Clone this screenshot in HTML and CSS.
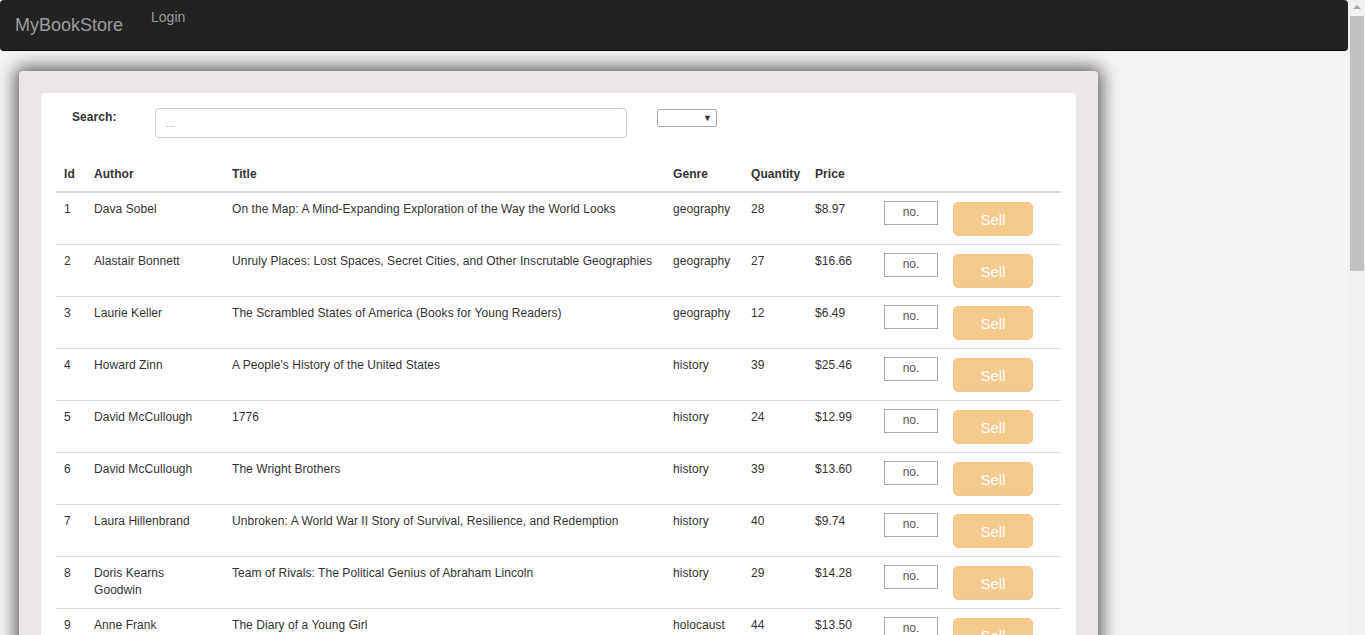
FILE: index.html
```html
<!DOCTYPE html>
<html>
<head>
<meta charset="utf-8">
<title>MyBookStore</title>
<link rel="stylesheet" href="styles.css">
</head>
<body>
<nav class="navbar">
  <a class="brand" href="#">MyBookStore</a>
  <a class="nav-link" href="#">Login</a>
</nav>
<div class="outer">
  <div class="inner">
    <div class="search-row">
      <label class="search-label">Search:</label>
      <input class="search-input" type="text" placeholder="...">
      <div class="select-box"><span class="arrow">&#9660;</span></div>
    </div>
    <table class="books">
      <colgroup>
        <col class="c-id"><col class="c-author"><col class="c-title"><col class="c-genre"><col class="c-qty"><col class="c-price"><col class="c-no"><col class="c-btn">
      </colgroup>
      <thead>
        <tr><th>Id</th><th>Author</th><th>Title</th><th>Genre</th><th>Quantity</th><th>Price</th><th></th><th></th></tr>
      </thead>
      <tbody>
        <tr><td>1</td><td>Dava Sobel</td><td>On the Map: A Mind-Expanding Exploration of the Way the World Looks</td><td>geography</td><td>28</td><td>$8.97</td><td><input class="no" type="text" placeholder="no."></td><td><button class="sell" disabled>Sell</button></td></tr>
        <tr><td>2</td><td>Alastair Bonnett</td><td>Unruly Places: Lost Spaces, Secret Cities, and Other Inscrutable Geographies</td><td>geography</td><td>27</td><td>$16.66</td><td><input class="no" type="text" placeholder="no."></td><td><button class="sell" disabled>Sell</button></td></tr>
        <tr><td>3</td><td>Laurie Keller</td><td>The Scrambled States of America (Books for Young Readers)</td><td>geography</td><td>12</td><td>$6.49</td><td><input class="no" type="text" placeholder="no."></td><td><button class="sell" disabled>Sell</button></td></tr>
        <tr><td>4</td><td>Howard Zinn</td><td>A People's History of the United States</td><td>history</td><td>39</td><td>$25.46</td><td><input class="no" type="text" placeholder="no."></td><td><button class="sell" disabled>Sell</button></td></tr>
        <tr><td>5</td><td>David McCullough</td><td>1776</td><td>history</td><td>24</td><td>$12.99</td><td><input class="no" type="text" placeholder="no."></td><td><button class="sell" disabled>Sell</button></td></tr>
        <tr><td>6</td><td>David McCullough</td><td>The Wright Brothers</td><td>history</td><td>39</td><td>$13.60</td><td><input class="no" type="text" placeholder="no."></td><td><button class="sell" disabled>Sell</button></td></tr>
        <tr><td>7</td><td>Laura Hillenbrand</td><td>Unbroken: A World War II Story of Survival, Resilience, and Redemption</td><td>history</td><td>40</td><td>$9.74</td><td><input class="no" type="text" placeholder="no."></td><td><button class="sell" disabled>Sell</button></td></tr>
        <tr><td>8</td><td>Doris Kearns Goodwin</td><td>Team of Rivals: The Political Genius of Abraham Lincoln</td><td>history</td><td>29</td><td>$14.28</td><td><input class="no" type="text" placeholder="no."></td><td><button class="sell" disabled>Sell</button></td></tr>
        <tr><td>9</td><td>Anne Frank</td><td>The Diary of a Young Girl</td><td>holocaust</td><td>44</td><td>$13.50</td><td><input class="no" type="text" placeholder="no."></td><td><button class="sell" disabled>Sell</button></td></tr>
      </tbody>
    </table>
  </div>
</div>
<div class="fake-scrollbar">
  <div class="sb-up"></div>
  <div class="sb-thumb"></div>
</div>
</body>
</html>
```
FILE: styles.css
```css
body {
  margin: 0;
  padding-right: 17px;
  background: #f4f4f4;
  font-family: "Liberation Sans", Arial, Helvetica, sans-serif;
  font-size: 12px;
  line-height: 17px;
  letter-spacing: 0.06px;
  color: #333;
}
.fake-scrollbar {
  position: fixed;
  top: 0;
  right: 0;
  width: 17px;
  height: 100%;
  background: #f1f1f1;
}
.sb-up {
  margin: 5px auto 0;
  width: 0;
  height: 0;
  border-left: 4px solid transparent;
  border-right: 4px solid transparent;
  border-bottom: 4px solid #a3a3a3;
}
.sb-thumb {
  margin: 7px 1px 0 2px;
  height: 255px;
  background: #c1c1c1;
}
.navbar {
  display: flex;
  align-items: flex-start;
  height: 50px;
  background: #222;
  border-bottom: 1px solid #080808;
  border-radius: 4px;
}
.brand {
  font-size: 18px;
  line-height: 20px;
  padding: 15px 15px;
  color: #9d9d9d;
  text-decoration: none;
  letter-spacing: 0;
}
.nav-link {
  font-size: 14px;
  line-height: 20px;
  padding: 7px 13px;
  color: #9d9d9d;
  text-decoration: none;
  letter-spacing: 0;
}
.outer {
  width: 1035px;
  margin: 20px 0 40px 19px;
  padding: 22px;
  background: #eae7e6;
  border-radius: 4px;
  box-shadow: 0 0 17px 4px rgba(0, 0, 0, 0.62);
}
.inner {
  background: #fff;
  border-radius: 4px;
  padding: 15px 15px 20px;
}
.search-row {
  display: flex;
  align-items: flex-start;
  padding-left: 16px;
  height: 30px;
}
.search-label {
  width: 83px;
  font-weight: bold;
  padding-top: 1px;
}
.search-input {
  width: 472px;
  height: 30px;
  box-sizing: border-box;
  border: 1px solid #ccc;
  border-radius: 4px;
  padding: 4px 10px;
  font-family: inherit;
  font-size: 12px;
  color: #555;
}
.search-input::placeholder {
  color: #999;
  font-size: 10px;
}
.select-box {
  margin-left: 30px;
  margin-top: 1px;
  width: 60px;
  height: 18px;
  box-sizing: border-box;
  border: 1px solid #a6a6a6;
  border-radius: 2px;
  display: flex;
  justify-content: flex-end;
  align-items: center;
  padding-right: 4px;
}
.arrow {
  font-size: 9px;
  line-height: 10px;
  color: #333;
}
.books {
  width: 1005px;
  margin-top: 20px;
  border-collapse: collapse;
  table-layout: fixed;
}
.c-id { width: 30px; }
.c-author { width: 138px; }
.c-title { width: 441px; }
.c-genre { width: 78px; }
.c-qty { width: 64px; }
.c-price { width: 69px; }
.c-no { width: 70px; }
.c-btn { width: 115px; }
.books th {
  text-align: left;
  font-weight: bold;
  padding: 8px;
  border-bottom: 2px solid #ddd;
  vertical-align: bottom;
}
.books td {
  padding: 8px;
  border-top: 1px solid #ddd;
  vertical-align: top;
}
.books td:nth-child(2) {
  padding-right: 12px;
}
.no {
  display: block;
  width: 54px;
  height: 24px;
  box-sizing: border-box;
  border: 1px solid #a9a9a9;
  padding: 0 4px 2px;
  text-align: center;
  font-family: inherit;
  font-size: 12px;
}
.no::placeholder {
  color: #555;
}
.sell {
  display: block;
  margin: 1px 0 0 -1px;
  width: 80px;
  height: 34px;
  border: 1px solid #f5c58a;
  border-radius: 5px;
  background: #f5ca8c;
  color: #fff;
  font-family: inherit;
  font-size: 15px;
  letter-spacing: 0;
  cursor: not-allowed;
}
```
